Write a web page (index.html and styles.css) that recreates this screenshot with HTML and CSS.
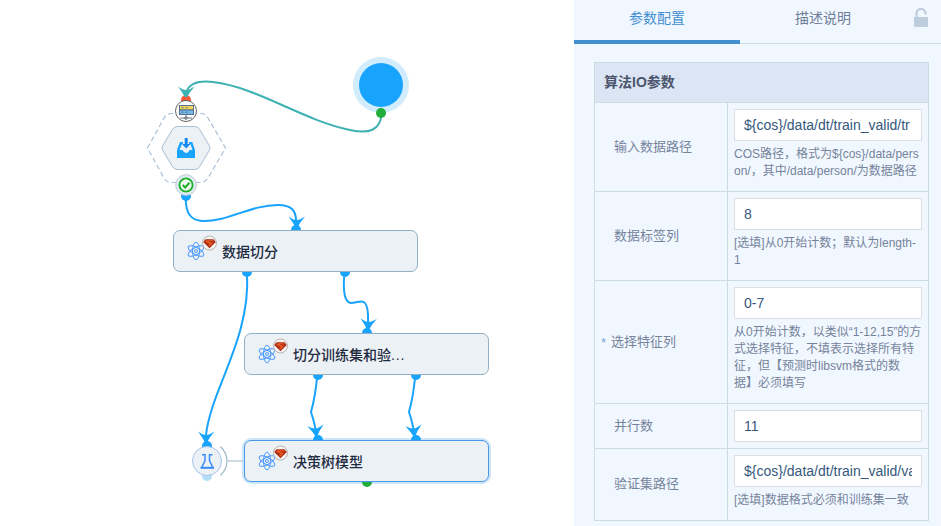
FILE: index.html
```html
<!DOCTYPE html>
<html lang="zh-CN">
<head>
<meta charset="utf-8">
<title>参数配置</title>
<link rel="stylesheet" href="styles.css">
</head>
<body>
<div class="app">
  <main class="canvas">
    <svg class="wires" width="574" height="526" viewBox="0 0 574 526">
      <defs>
        <path id="arrow" d="M0 1 L-3.500 -5.500 L-8 -12 Q-3 -8.500 0 -8.500 Q3 -8.500 8.500 -12 L3.500 -5.500 Z"/>
        <g id="atom" fill="none" stroke="#4d9bff" stroke-width="1">
          <ellipse rx="3.5" ry="8.8"/>
          <ellipse rx="3.5" ry="8.8" transform="rotate(60)"/>
          <ellipse rx="3.5" ry="8.8" transform="rotate(120)"/>
          <circle r="1.5"/>
        </g>
        <g id="gem">
          <circle r="7" fill="#f6f2f0" stroke="#b9b3b3"/>
          <path d="M-6.3 -1 L-4 -3.800 H4 L6.300 -1 L0 5.200 Z" fill="#a82c17"/>
          <path d="M-4.300 -1.300 L-3 -2.800 H3.500 L4.500 -1.500 Q0 -2.200 -1 -1.200 L3.500 0 L0 3.400 L-1.600 1.800 L1 1.300 Z" fill="#e9591f"/>
        </g>
      </defs>
      <circle cx="381" cy="85" r="28" fill="#d0ecfd"/>
      <circle cx="381" cy="85" r="22" fill="#18a3fc"/>
      <path class="wire teal" d="M381.500 113 C381 131 368 134 350 130 C302 120 257 87 213 82 C196 80 187 85 186 94"/>
      <circle cx="381" cy="113" r="5" fill="#21ad3b"/>
      <path d="M147.500 148 L164 118 Q167 113.500 171 113.500 H201 Q205 113.500 208 118 L225.500 148 L208 178 Q205 182.500 201 182.500 H171 Q167 182.500 164 178 Z" fill="#fff" stroke="#acc0d5" stroke-width="1.200" stroke-dasharray="5 3"/>
      <path d="M162.500 150 Q161.500 148 162.500 146 L172 130 Q174 126.500 177 126.500 H195 Q198 126.500 200 130 L209.500 146 Q210.500 148 209.500 150 L200 166 Q198 169.500 195 169.500 H177 Q174 169.500 172 166 Z" fill="#ecf1f6" stroke="#a9bfd4"/>
      <path d="M180 142 H183 V144 H182 L179.500 150 H182.500 Q184 153 186 153 Q188.500 153 189.500 150 H192.500 L190.500 144 H189 V142 H192.300 L195 150 V158 H177 V150 Z" fill="#18a3fc"/>
      <path d="M184.700 138 H187.700 V144 H190.500 L186.200 148.500 L182 144 H184.700 Z" fill="#1688f3"/>
      <path d="M181 102 V100 A5 5 0 0 1 191 100 V102 Z" fill="#fb5a36"/>
      <use href="#arrow" x="186" y="98.500" fill="#3eb1b3"/>
      <path d="M181.200 100.500 A5 5 0 0 1 190.800 100.500 Z" fill="#fb5a36"/>
      <circle cx="186" cy="111" r="10.500" fill="#fff" stroke="#666"/>
      <g stroke="#55718f" stroke-width="1">
        <rect x="179.500" y="105.500" width="14" height="4.500" fill="#f7d655"/>
        <rect x="179.500" y="110" width="14" height="4.500" fill="#72b8e5"/>
        <path d="M181.500 107.700h2m2 0h2M181.500 112.200h2m2 0h2M186 114.500v3M180.500 118h11.500" fill="none"/>
        <circle cx="186" cy="118" r="1.300" fill="#e9b94a"/>
      </g>
      <circle cx="186" cy="196" r="5" fill="#18a3fc"/>
      <circle cx="186" cy="185" r="10.300" fill="#dfebf5" stroke="#c6cbd1"/>
      <circle cx="186" cy="185" r="6.600" fill="#f2faf3" stroke="#1fb02b" stroke-width="1.900"/>
      <path d="M182.700 185 L185.200 187.500 L189.500 182.800" fill="none" stroke="#1fb02b" stroke-width="2"/>
      <rect x="242" y="438" width="249" height="46" rx="9" fill="#cce5f8"/>
      <g class="wire blue">
        <path d="M185.700 199 C186 214 191 220 202 221 C227 222 250 205 278 205 C292 205 296 211 296 221"/>
        <path d="M247 273 C251 338 211 389 206 435"/>
        <path d="M344.500 273 C343 288 344 302 351 303 C357 303 362 299 365 303 C369 308 368 316 368 324"/>
        <path d="M317 378 Q315 398 311 412 Q315 424 316 433"/>
        <path d="M415 378 Q413 398 409 412 Q413 424 414 433"/>
      </g>
      <g fill="#18a3fc">
        <use href="#arrow" x="296.500" y="228.500"/>
        <use href="#arrow" x="206" y="443.500"/>
        <use href="#arrow" transform="translate(368 330.500) rotate(2)"/>
        <use href="#arrow" transform="translate(316.500 437) rotate(-6)"/>
        <use href="#arrow" transform="translate(414.500 437) rotate(-6)"/>
        <circle cx="296" cy="230" r="5"/>
        <circle cx="367" cy="333" r="5"/>
        <circle cx="318" cy="440" r="5"/>
        <circle cx="416" cy="440" r="5"/>
        <circle cx="247" cy="272" r="5"/>
        <circle cx="345" cy="272" r="5"/>
        <circle cx="318" cy="375" r="5"/>
        <circle cx="416" cy="375" r="5"/>
        <circle cx="207" cy="446" r="5"/>
      </g>
      <circle cx="367" cy="482" r="5" fill="#21ad3b"/>
      <circle cx="207" cy="476" r="5" fill="#b5def9"/>
      <circle cx="207" cy="461" r="14.500" fill="#ecf1f6" stroke="#a3c2ec"/>
      <path d="M202 454.700h3V460.500L201.500 468M212.500 454.700H209.500V460.500L213 468" fill="none" stroke="#398bf7" stroke-width="1.500"/>
      <path d="M200.500 467.800 H214" stroke="#398bf7" stroke-width="2"/>
      <path d="M220.500 446.500 Q227 453 227 461 Q227 469 220.500 475.500 M228 461 H243" fill="none" stroke="#9db7c5" stroke-width="1.200"/>
    </svg>
    <div class="node split">
      <svg class="mark" width="32" height="30" viewBox="0 0 32 30"><use href="#atom" x="10" y="19"/><use href="#gem" x="23.500" y="11"/></svg>
      <span>数据切分</span>
    </div>
    <div class="node train">
      <svg class="mark" width="32" height="30" viewBox="0 0 32 30"><use href="#atom" x="10" y="19"/><use href="#gem" x="23.500" y="11"/></svg>
      <span>切分训练集和验<span class="dots">...</span></span>
    </div>
    <div class="node tree active">
      <svg class="mark" width="32" height="30" viewBox="0 0 32 30"><use href="#atom" x="10" y="19"/><use href="#gem" x="23.500" y="11"/></svg>
      <span>决策树模型</span>
    </div>
  </main>
  <aside class="panel">
    <nav class="tabs">
      <a class="tab current">参数配置</a>
      <a class="tab">描述说明</a>
      <svg class="lock" width="16" height="20" viewBox="0 0 16 20"><path d="M3.500 9.500V5.500a4.500 4.500 0 0 1 9 0V6.500" fill="none" stroke="#bdcddd" stroke-width="2.200"/><rect x="1" y="9" width="14" height="10" rx="1" fill="#bdcddd"/></svg>
    </nav>
    <section class="params">
      <h2 class="title">算法IO参数</h2>
      <div class="row tall">
        <div class="label">输入数据路径</div>
        <div class="field"><div class="input"><span class="value">${cos}/data/dt/train_valid/tr</span></div><p class="help">COS路径，格式为${cos}/data/person/，其中/data/person/为数据路径</p></div>
      </div>
      <div class="row tall">
        <div class="label">数据标签列</div>
        <div class="field"><div class="input"><span class="value">8</span></div><p class="help">[选填]从0开始计数；默认为length-<br>1</p></div>
      </div>
      <div class="row features">
        <div class="label required"><span class="star">*</span>选择特征列</div>
        <div class="field"><div class="input"><span class="value">0-7</span></div><p class="help">从0开始计数，以类似“1-12,15”的方<br>式选择特征，不填表示选择所有特<br>征，但【预测时libsvm格式的数<br>据】必须填写</p></div>
      </div>
      <div class="row short">
        <div class="label">并行数</div>
        <div class="field"><div class="input"><span class="value">11</span></div></div>
      </div>
      <div class="row valid">
        <div class="label">验证集路径</div>
        <div class="field"><div class="input"><span class="value">${cos}/data/dt/train_valid/va</span></div><p class="help">[选填]数据格式必须和训练集一致</p></div>
      </div>
    </section>
  </aside>
</div>
</body>
</html>
```
FILE: styles.css
```css
* { box-sizing: border-box; }
body {
  margin: 0;
  font-family: "Liberation Sans", "Noto Sans CJK SC", sans-serif;
  background: #fff;
}
.app { display: flex; width: 941px; height: 526px; overflow: hidden; }
.canvas { position: relative; width: 574px; flex: none; }
.wires { display: block; }
.wire { fill: none; stroke-width: 2; }
.teal { stroke: #3eb1b3; }
.blue { stroke: #18a3fc; }
.node {
  position: absolute;
  display: flex;
  align-items: center;
  gap: 4px;
  width: 245px;
  height: 42px;
  padding-left: 12px;
  border: 1px solid #91b0c3;
  border-radius: 7px;
  background: #ecf1f6;
  color: #1f2b40;
  font-size: 14px;
  font-weight: 500;
}
.dots { letter-spacing: .8px; }
.mark { flex: none; margin-top: -8px; }
.split { left: 173px; top: 230px; }
.train { left: 244px; top: 333px; }
.tree { left: 244px; top: 440px; }
.active { border-color: #4a98e8; }
.panel { flex: 1; background: #f1f7ff; }
.tabs {
  display: flex;
  height: 44px;
  border-bottom: 1px solid #d1dee8;
}
.tab {
  width: 166px;
  height: 44px;
  color: #6e7d97;
  font-size: 14px;
  line-height: 36px;
  text-align: center;
}
.current { color: #428fd2; border-bottom: 4px solid #428fd0; }
.lock { margin: 8px 0 0 7px; }
.params {
  width: 335px;
  margin: 18px 0 0 20px;
  border: 1px solid #cbdce5;
  border-bottom: 0;
}
.title {
  height: 40px;
  margin: 0;
  padding-left: 9px;
  border-bottom: 1px solid #cbdce5;
  background: #dbe5f3;
  color: #4b566e;
  font-size: 14px;
  font-weight: 600;
  line-height: 39px;
}
.row {
  display: grid;
  grid-template-columns: 133px 1fr;
  border-bottom: 1px solid #cbdce5;
}
.tall { height: 89px; }
.features { height: 123px; }
.short { height: 45px; }
.valid { height: 72px; }
.label {
  display: flex;
  align-items: center;
  padding: 0 0 4px 19px;
  border-right: 1px solid #cbdce5;
  color: #75839b;
  font-size: 13px;
}
.required { padding-left: 6px; }
.star { width: 10px; padding-top: 4px; color: #7fa9d5; }
.field { padding: 6px 6px 0; min-width: 0; }
.input {
  height: 32px;
  padding: 0 9px;
  border: 1px solid #dcdfe2;
  background: #fff;
  color: #35587e;
  font-size: 14px;
  line-height: 30px;
}
.value {
  display: block;
  overflow: hidden;
  white-space: nowrap;
}
.help {
  margin: 5px -5px 0 0;
  padding-right: 4px;
  color: #75839b;
  font-size: 12px;
  line-height: 17px;
  word-break: break-all;
}
```
